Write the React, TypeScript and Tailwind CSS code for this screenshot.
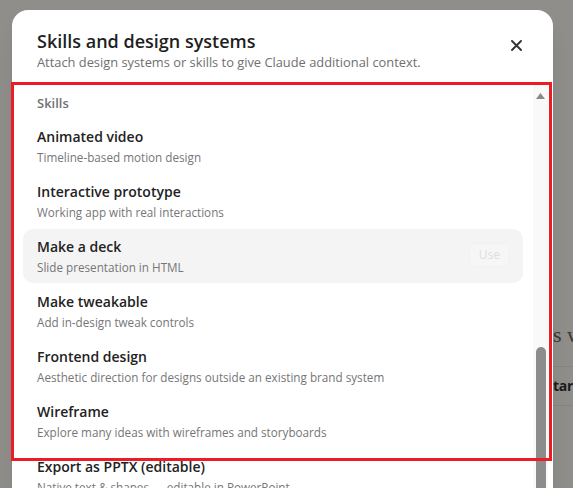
import React from 'react'

const skills = [
  { name: 'Animated video', blurb: 'Timeline-based motion design' },
  { name: 'Interactive prototype', blurb: 'Working app with real interactions' },
  { name: 'Make a deck', blurb: 'Slide presentation in HTML', hover: true },
  { name: 'Make tweakable', blurb: 'Add in-design tweak controls' },
  { name: 'Frontend design', blurb: 'Aesthetic direction for designs outside an existing brand system' },
  { name: 'Wireframe', blurb: 'Explore many ideas with wireframes and storyboards' },
  { name: 'Export as PPTX (editable)', blurb: 'Native text & shapes — editable in PowerPoint' },
]

function SkillRow({ name, blurb, hover }: { name: string; blurb: string; hover?: boolean }) {
  return (
    <div className={`flex h-[54px] shrink-0 items-start justify-between rounded-[10px] px-[14px] pt-[8px] ${hover ? 'bg-[#f4f4f4]' : ''}`}>
      <div>
        <div className="text-[14px] font-semibold leading-[20px] text-[#222]">{name}</div>
        <div className="mt-px text-[11.7px] leading-[18px] text-[#767676]">{blurb}</div>
      </div>
      {hover && (
        <button className="mt-[6px] mr-[-1px] h-[24px] rounded-[6px] border border-[#f1f1f1] bg-[#f6f6f6] px-[9px] text-[12px] leading-[22px] text-[#dedede]">
          Use
        </button>
      )}
    </div>
  )
}

function SkillsDialog() {
  return (
    <div className="absolute left-[12px] top-[10px] flex h-[500px] w-[541px] flex-col overflow-hidden rounded-[16px] bg-white shadow-xl">
      <div className="flex h-[74px] shrink-0 justify-between pl-[25px] pr-[31px] pt-[19px]">
        <div>
          <div className="text-[18px] font-semibold leading-[24px] text-[#1f1f1f]">Skills and design systems</div>
          <div className="text-[12.85px] leading-[18px] text-[#6f6f6f]">
            Attach design systems or skills to give Claude additional context.
          </div>
        </div>
        <svg className="mt-[11px]" width="11" height="11" viewBox="0 0 11 11" fill="none">
          <path d="M1 1L10 10M10 1L1 10" stroke="#333" strokeWidth="1.9" strokeLinecap="round" />
        </svg>
      </div>
      <div className="flex min-h-0 flex-1 pr-[5px]">
        <div className="flex flex-1 flex-col pl-[11px] pr-[10px]">
          <div className="px-[14px] pt-[10px] text-[13px] font-semibold leading-[18px] text-[#737373]">Skills</div>
          <div className="mt-[7px] flex flex-col gap-px">
            {skills.map((s) => (
              <SkillRow key={s.name} {...s} />
            ))}
          </div>
        </div>
        {/* scrollbar */}
        <div className="flex w-[15px] flex-col items-center bg-[#f9f9f9]">
          <div className="flex h-[30px] items-center justify-center">
            <svg width="9" height="6" viewBox="0 0 9 6">
              <path d="M4.5 0L9 6H0Z" fill="#8a8a8a" />
            </svg>
          </div>
          <div className="ml-[1px] mt-[238px] h-[200px] w-[10px] rounded-full bg-[#8c8c8c]" />
        </div>
      </div>
    </div>
  )
}

export default function App() {
  return (
    <div className="relative h-[488px] w-[573px] overflow-hidden bg-[#8f8e8a] font-['Open_Sans',sans-serif]">
      {/* dimmed page behind the dialog */}
      <div className="flex flex-col pl-[553px] pt-[318px]">
        <div className="h-[49px] border-b border-[#858480] pt-[4px] font-['Liberation_Serif',serif] text-[22px] leading-[26px] text-[#3a3a38] whitespace-nowrap">
          s w
        </div>
        <div className="h-[39px] border-b border-[#858480] pt-[9px] text-[14px] font-bold leading-[20px] tracking-[-0.3px] text-[#1c1c1b] whitespace-nowrap">
          tart
        </div>
      </div>
      <SkillsDialog />
      <div className="pointer-events-none absolute left-[11px] top-[82px] h-[379px] w-[541px] border-[3px] border-[#ec1c24]" />
    </div>
  )
}
